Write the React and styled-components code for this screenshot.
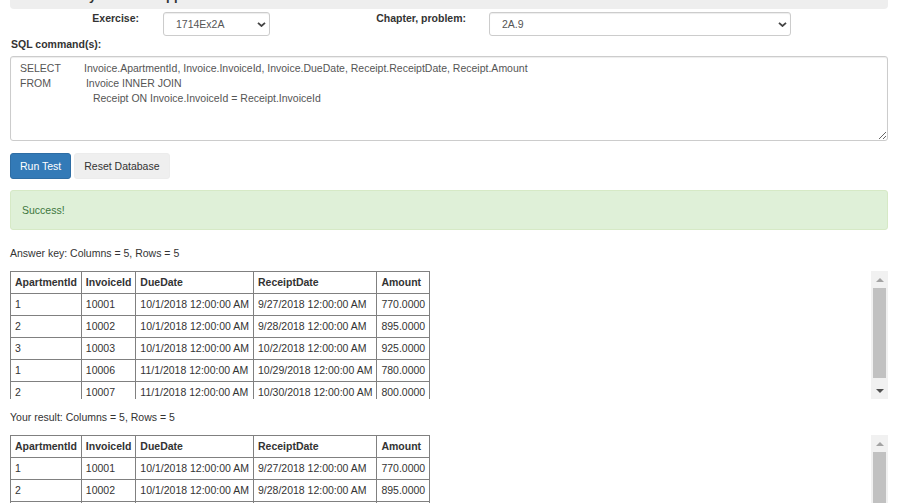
import React from 'react';
import styled, { createGlobalStyle } from 'styled-components';

const GlobalStyle = createGlobalStyle`
  body {
    margin: 0;
    background: #fff;
    font-family: "Liberation Sans", Arial, sans-serif;
    font-size: 10.5px;
    line-height: 15px;
    color: #333;
  }
`;

const Page = styled.div`
  width: 878px;
  margin-left: 10px;
`;

const Well = styled.div`
  height: 40px;
  margin-top: -31px;
  background: #eee;
  border-radius: 4px;
  display: flex;
  align-items: flex-end;
  padding: 0 10px 6px;
  box-sizing: border-box;
`;

const Title = styled.div`
  font-size: 13px;
  font-weight: bold;
  line-height: 15px;
  color: #333;
`;

const FormRow = styled.div`
  display: grid;
  grid-template-columns: 153px 107px 219px 302px;
  margin-top: 3px;
  height: 24px;
`;

const FieldLabel = styled.label`
  font-weight: bold;
  text-align: right;
  padding-right: ${p => p.$gap}px;
  margin-top: -1px;
`;

const SelectWrap = styled.div`
  position: relative;
`;

const Select = styled.select`
  appearance: none;
  width: 100%;
  height: 24px;
  box-sizing: border-box;
  border: 1px solid #ccc;
  border-radius: 3px;
  background: #fff;
  padding: 0 0 0 12px;
  font-family: inherit;
  font-size: 10.5px;
  color: #555;
  box-shadow: inset 0 1px 1px rgba(0, 0, 0, 0.075);
`;

const Chevron = styled.svg`
  position: absolute;
  right: 4px;
  top: 10px;
  width: 9px;
  height: 5px;
  pointer-events: none;
`;

const SectionLabel = styled.div`
  font-weight: bold;
  margin: 1px 0 4px 1px;
`;

const SqlBox = styled.textarea`
  display: block;
  width: 100%;
  height: 85px;
  box-sizing: border-box;
  border: 1px solid #ccc;
  border-radius: 3px;
  padding: 4px 9px;
  font-family: inherit;
  font-size: 10.5px;
  line-height: 15px;
  color: #555;
  white-space: pre;
  box-shadow: inset 0 1px 1px rgba(0, 0, 0, 0.075);
  outline: none;
`;

const ButtonRow = styled.div`
  display: flex;
  gap: 3px;
  margin-top: 12px;
`;

const Button = styled.button`
  height: 26px;
  padding: 0 9px;
  border-radius: 3px;
  border: 1px solid ${p => (p.$primary ? '#2e6da4' : '#ececec')};
  background: ${p => (p.$primary ? '#337ab7' : '#efefef')};
  color: ${p => (p.$primary ? '#fff' : '#333')};
  font-family: inherit;
  font-size: 10.5px;
  line-height: 15px;
`;

const Alert = styled.div`
  margin-top: 11px;
  padding: 11.5px 11px;
  border: 1px solid #d6e9c6;
  border-radius: 3px;
  background: #dff0d8;
  color: #3c763d;
`;

const Caption = styled.div`
  margin-top: ${p => p.$top}px;
`;

const ScrollBox = styled.div`
  margin-top: 10px;
  height: 128px;
  display: flex;
  overflow: hidden;
`;

const Viewport = styled.div`
  flex: 1;
  overflow: hidden;
`;

const ScrollTrack = styled.div`
  width: 17px;
  flex: none;
  background: #f1f1f1;
  display: flex;
  flex-direction: column;
`;

const ArrowButton = styled.div`
  height: 17px;
  flex: none;
  display: flex;
  align-items: center;
  justify-content: center;

  &::before {
    content: '';
    width: 0;
    height: 0;
    border-left: 4px solid transparent;
    border-right: 4px solid transparent;
    ${p =>
      p.$down
        ? 'border-top: 4px solid #505050;'
        : 'border-bottom: 4px solid #a3a3a3;'}
  }
`;

const Thumb = styled.div`
  height: 90px;
  flex: none;
  margin: 0 2px;
  background: #c1c1c1;
`;

const TrackRest = styled.div`
  flex: 1;
`;

const DataTable = styled.table`
  border-collapse: collapse;
  border: 1px solid #808080;
`;

const Th = styled.th`
  border: 1px solid #808080;
  padding: 3px 4px;
  text-align: left;
  font-weight: bold;
  white-space: nowrap;
`;

const Td = styled.td`
  border: 1px solid #808080;
  padding: 3px 4px;
  white-space: nowrap;
`;

const columns = ['ApartmentId', 'InvoiceId', 'DueDate', 'ReceiptDate', 'Amount'];

const rows = [
  ['1', '10001', '10/1/2018 12:00:00 AM', '9/27/2018 12:00:00 AM', '770.0000'],
  ['2', '10002', '10/1/2018 12:00:00 AM', '9/28/2018 12:00:00 AM', '895.0000'],
  ['3', '10003', '10/1/2018 12:00:00 AM', '10/2/2018 12:00:00 AM', '925.0000'],
  ['1', '10006', '11/1/2018 12:00:00 AM', '10/29/2018 12:00:00 AM', '780.0000'],
  ['2', '10007', '11/1/2018 12:00:00 AM', '10/30/2018 12:00:00 AM', '800.0000'],
];

const sql =
  'SELECT' + ' '.repeat(8) +
  'Invoice.ApartmentId, Invoice.InvoiceId, Invoice.DueDate, Receipt.ReceiptDate, Receipt.Amount\n' +
  'FROM' + ' '.repeat(12) + 'Invoice INNER JOIN\n' +
  ' '.repeat(25) + 'Receipt ON Invoice.InvoiceId = Receipt.InvoiceId';

const ChevronIcon = () => (
  <Chevron viewBox="0 0 9 5">
    <polyline points="1,0.8 4.5,4 8,0.8" fill="none" stroke="#444" strokeWidth="1.8" />
  </Chevron>
);

const Dropdown = ({ value }) => (
  <SelectWrap>
    <Select defaultValue={value}>
      <option value={value}>{value}</option>
    </Select>
    <ChevronIcon />
  </SelectWrap>
);

const ResultTable = ({ title, top }) => (
  <>
    <Caption $top={top}>{title}</Caption>
    <ScrollBox>
      <Viewport>
        <DataTable>
          <thead>
            <tr>
              {columns.map(c => (
                <Th key={c}>{c}</Th>
              ))}
            </tr>
          </thead>
          <tbody>
            {rows.map((r, i) => (
              <tr key={i}>
                {r.map((v, j) => (
                  <Td key={j}>{v}</Td>
                ))}
              </tr>
            ))}
          </tbody>
        </DataTable>
      </Viewport>
      <ScrollTrack>
        <ArrowButton />
        <Thumb />
        <TrackRest />
        <ArrowButton $down />
      </ScrollTrack>
    </ScrollBox>
  </>
);

export default function App() {
  return (
    <>
      <GlobalStyle />
      <Page>
        <Well>
          <Title>Data Test by Exercise Application</Title>
        </Well>
        <FormRow>
          <FieldLabel $gap={24}>Exercise:</FieldLabel>
          <Dropdown value="1714Ex2A" />
          <FieldLabel $gap={23}>Chapter, problem:</FieldLabel>
          <Dropdown value="2A.9" />
        </FormRow>
        <SectionLabel>SQL command(s):</SectionLabel>
        <SqlBox defaultValue={sql} spellCheck={false} />
        <ButtonRow>
          <Button $primary>Run Test</Button>
          <Button>Reset Database</Button>
        </ButtonRow>
        <Alert>Success!</Alert>
        <ResultTable title="Answer key: Columns = 5, Rows = 5" top={16} />
        <ResultTable title="Your result: Columns = 5, Rows = 5" top={11} />
      </Page>
    </>
  );
}
